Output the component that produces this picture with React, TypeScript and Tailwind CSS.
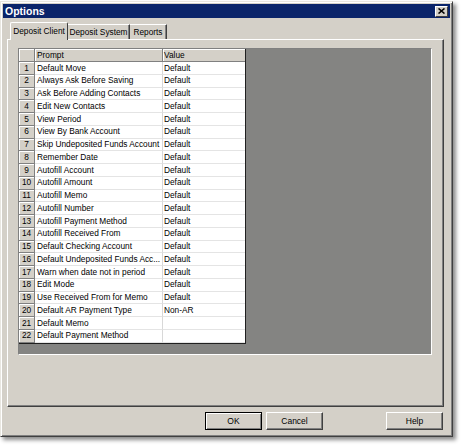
import React from "react";

const rows: [string, string][] = [
  ["Default Move", "Default"],
  ["Always Ask Before Saving", "Default"],
  ["Ask Before Adding Contacts", "Default"],
  ["Edit New Contacts", "Default"],
  ["View Period", "Default"],
  ["View By Bank Account", "Default"],
  ["Skip Undeposited Funds Account", "Default"],
  ["Remember Date", "Default"],
  ["Autofill Account", "Default"],
  ["Autofill Amount", "Default"],
  ["Autofill Memo", "Default"],
  ["Autofill Number", "Default"],
  ["Autofill Payment Method", "Default"],
  ["Autofill Received From", "Default"],
  ["Default Checking Account", "Default"],
  ["Default Undeposited Funds Acc...", "Default"],
  ["Warn when date not in period", "Default"],
  ["Edit Mode", "Default"],
  ["Use Received From for Memo", "Default"],
  ["Default AR Payment Type", "Non-AR"],
  ["Default Memo", ""],
  ["Default Payment Method", ""],
];

function Button({ label, isDefault }: { label: string; isDefault?: boolean }) {
  return (
    <button
      className={`h-[18px] w-[57px] bg-[#d4d0c8] text-[8.5px] text-black grid place-items-center border ${
        isDefault
          ? "border-black shadow-[inset_1px_1px_#fff,inset_-1px_-1px_#808080]"
          : "border-t-white border-l-white border-b-[#404040] border-r-[#404040] shadow-[inset_-1px_-1px_#808080]"
      }`}
    >
      {label}
    </button>
  );
}

export default function App() {
  return (
    <div
      className="w-[461px] h-[447px] bg-white overflow-hidden"
      style={{ fontFamily: '"Liberation Sans", Arial, sans-serif' }}
    >
      <div className="mt-[1px] w-[453px] h-[436px] bg-[#d4d0c8] border border-t-[#e8e6e0] border-l-[#e8e6e0] border-b-[#404040] border-r-[#404040] shadow-[inset_1px_1px_#fff,inset_-1px_-1px_#808080,3px_3px_4px_rgba(0,0,0,0.45)] p-[2px] flex flex-col">
        {/* title bar */}
        <div className="h-[14px] bg-[#0a246a] flex items-center justify-between pl-[2px] pr-[2px]">
          <span className="text-white font-bold text-[10.5px] leading-none">Options</span>
          <div className="w-[13px] h-[11px] bg-[#d4d0c8] border border-t-white border-l-white border-b-[#404040] border-r-[#404040] grid place-items-center">
            <svg width="7" height="6" viewBox="0 0 7 6">
              <path d="M0.5 0.5 L6.5 5.5 M6.5 0.5 L0.5 5.5" stroke="black" strokeWidth="1.6" />
            </svg>
          </div>
        </div>

        {/* tabs */}
        <div className="ml-[4px] mt-[3px] flex flex-col">
          <div className="flex items-end h-[18px] pl-[3px] relative z-10 text-[8.3px] text-black whitespace-nowrap">
            <div className="h-[18px] -mb-[1px] w-[58px] bg-[#d4d0c8] border-t border-l border-r border-t-white border-l-white border-r-[#404040] rounded-t-[2px] flex items-center justify-center">
              Deposit Client
            </div>
            <div className="h-[15px] w-[62px] bg-[#d4d0c8] border-t border-r border-t-white border-r-[#404040] flex items-center justify-center shadow-[inset_-1px_0_#808080]">
              Deposit System
            </div>
            <div className="h-[15px] w-[37px] bg-[#d4d0c8] border-t border-r border-t-white border-r-[#404040] flex items-center justify-center shadow-[inset_-1px_0_#808080]">
              Reports
            </div>
          </div>
          {/* panel */}
          <div className="w-[437px] h-[368px] border border-t-white border-l-white border-b-[#404040] border-r-[#404040] shadow-[inset_-1px_-1px_#808080] pl-[10px] pt-[8px]">
            <div className="w-[414px] h-[307px] bg-[#848482] border border-t-[#808080] border-l-[#808080] border-b-white border-r-white">
              <div className="w-[227px] border-r border-b border-r-[#202020] border-b-[#202020] bg-white grid grid-cols-[16px_128px_82px] text-[8.3px] text-black">
                <div className="h-[13px] bg-[#d4d0c8] border-r border-b border-r-[#808080] border-b-[#808080] shadow-[inset_1px_1px_#fff]" />
                <div className="h-[13px] bg-[#d4d0c8] border-r border-b border-r-[#808080] border-b-[#808080] shadow-[inset_1px_1px_#fff] pl-[2px] flex items-center">
                  Prompt
                </div>
                <div className="h-[13px] bg-[#d4d0c8] border-b border-b-[#808080] shadow-[inset_1px_1px_#fff] pl-[1px] flex items-center">
                  Value
                </div>
                {rows.map(([p, v], i) => (
                  <React.Fragment key={i}>
                    <div className="h-[12.75px] bg-[#d4d0c8] border-r border-b border-r-[#808080] border-b-[#808080] shadow-[inset_1px_1px_#fff] flex items-center justify-center">
                      {i + 1}
                    </div>
                    <div className="h-[12.75px] border-r border-b border-r-[#d8d8d8] border-b-[#e4e4e4] pl-[2px] flex items-center whitespace-nowrap overflow-hidden">
                      {p}
                    </div>
                    <div className="h-[12.75px] border-b border-b-[#e4e4e4] pl-[1px] flex items-center whitespace-nowrap">
                      {v}
                    </div>
                  </React.Fragment>
                ))}
              </div>
            </div>
          </div>
        </div>

        {/* buttons */}
        <div className="ml-[4px] mt-[5px] w-[437px] flex items-center">
          <div className="ml-[198px] flex gap-[4px]">
            <Button label="OK" isDefault />
            <Button label="Cancel" />
          </div>
          <div className="ml-auto mr-[1px]">
            <Button label="Help" />
          </div>
        </div>
      </div>
    </div>
  );
}
